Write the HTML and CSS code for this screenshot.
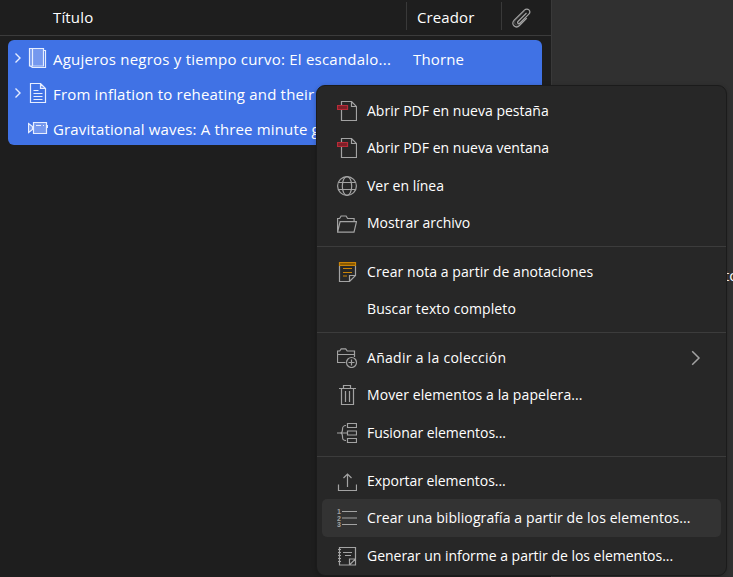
FILE: index.html
```html
<!DOCTYPE html>
<html lang="es">
<head>
<meta charset="utf-8">
<title>Biblioteca</title>
<link rel="stylesheet" href="styles.css">
</head>
<body>
<div class="app">
  <main class="library">
    <header class="columns">
      <span class="col-title">Título</span>
      <span class="col-creator">Creador</span>
      <span class="col-attach">
        <svg width="20" height="20" viewBox="0 0 20 20"><path d="M14.5 5 6.2 13.2c-1.5 1.5.3 3.3 1.8 1.8l8.6-8.6c3.2-3.2-1-7.4-4.2-4.2L2.2 12.1c-4 4 1.5 9.2 5.3 5.4l7.3-7.3"/><path d="m12.5 3-8.9 9c-3 3 .9 6.7 3.8 3.9" opacity=".3"/></svg>
      </span>
    </header>
    <section class="selection">
      <div class="row">
        <svg class="twisty" viewBox="0 0 8 12"><path d="m1.5 1.5 4.5 4.5-4.5 4.5"/></svg>
        <svg class="type" viewBox="0 0 20 20"><path class="tint" d="M1.5.5h14v17h-14z"/><path d="M1.5.5h14v17.500h-14zM4.500.5v17M15.500 2.500h2v17H4.500l-3-2"/></svg>
        <span class="name t-agujeros">Agujeros negros y tiempo curvo: El escandalo...</span>
        <span class="creator">Thorne</span>
      </div>
      <div class="row">
        <svg class="twisty" viewBox="0 0 8 12"><path d="m1.5 1.5 4.5 4.5-4.5 4.5"/></svg>
        <svg class="type" viewBox="0 0 20 20"><path class="tint" d="M12.500.5v5h5z"/><path d="M2.500.5h10l5 5v14h-15zM12.500.5v5h5M5.500 7.500h5M5.500 10.500h9M5.500 13.500h9M5.500 16.500h9"/></svg>
        <span class="name t-from">From inflation to reheating and their dynamics</span>
      </div>
      <div class="row">
        <span class="twisty"></span>
        <svg class="type" viewBox="0 0 20 20"><path class="tint" d="M5.500 4.500h13v11h-13zM.5 5.500l4 3v3l-4 3z"/><path d="M5.500 4.500h13v11h-13zM.5 5.500l4 3v3l-4 3zM8 7.500h5M15 7.500h1M19.500 7v3"/></svg>
        <span class="name t-grav">Gravitational waves: A three minute guide</span>
      </div>
    </section>
  </main>
  <aside class="details"><span>to</span></aside>
</div>

<nav class="menu">
  <div class="item">
    <svg viewBox="0 0 20 20"><path d="M4.500 4V.5h10l5 5v14h-15V9M14.500.5v5h5"/><path class="pdf" d="M.5 4.500h10v4H.5z"/></svg>
    <span class="m1">Abrir PDF en nueva pestaña</span>
  </div>
  <div class="item">
    <svg viewBox="0 0 20 20"><path d="M4.500 4V.5h10l5 5v14h-15V9M14.500.5v5h5"/><path class="pdf" d="M.5 4.500h10v4H.5z"/></svg>
    <span class="m1">Abrir PDF en nueva ventana</span>
  </div>
  <div class="item">
    <svg viewBox="0 0 20 20"><circle cx="10" cy="10" r="9.400"/><ellipse cx="10" cy="10" rx="4.700" ry="9.400"/><path d="M1.500 6.500h17M1.500 13.500h17"/></svg>
    <span>Ver en línea</span>
  </div>
  <div class="item">
    <svg viewBox="0 0 20 20"><path d="M.6 18.500v-13h2l1.500-2.500h5l1.500 2.500h6.500v3M.6 19.200l2.500-10.600h16.400l-2.500 10.600z"/></svg>
    <span>Mostrar archivo</span>
  </div>
  <hr>
  <div class="item">
    <svg viewBox="0 0 20 20"><path d="M2.500 4v15.500h10l6-6V4M12.500 19.500v-6h6"/><path class="note-bar" d="M2.500.5h16v3h-16z"/><path class="note" d="M6 6.500h9M6 10.500h9M6 14h4"/></svg>
    <span class="m5">Crear nota a partir de anotaciones</span>
  </div>
  <div class="item">
    <svg viewBox="0 0 20 20"></svg>
    <span class="m6">Buscar texto completo</span>
  </div>
  <hr class="roomy">
  <div class="item">
    <svg viewBox="0 0 20 20"><path d="M8.500 14.500h-8V3h2.200L4.200.8h4.500l1.500 2.200h7.300v6M.5 6.500h17"/><circle cx="14.500" cy="14.500" r="5"/><path d="M14.500 11.500v6M11.500 14.500h6"/></svg>
    <span class="m7">Añadir a la colección</span>
    <svg class="arrow" viewBox="0 0 10 16"><path d="m1.200 1.200 6.800 6.800-6.800 6.800"/></svg>
  </div>
  <div class="item">
    <svg viewBox="0 0 20 20"><path d="M2 3.500h17M6.500 3V.5h7V3M4.500 3.500v16h12v-16M8.500 6v11M12.500 6v11"/></svg>
    <span class="m8">Mover elementos a la papelera...</span>
  </div>
  <div class="item">
    <svg viewBox="0 0 20 20"><path d="M10.500.5h9v4h-9zM10.500 8h9v4h-9zM10.500 15.500h9v4h-9zM0 10h10M9 2.500c-3 0-3.500 1-3.500 4 0 2-.5 3.500-2.500 3.500 2 0 2.500 1.500 2.500 3.500 0 3 .5 4 3.500 4"/></svg>
    <span class="m9">Fusionar elementos...</span>
  </div>
  <hr class="tight">
  <div class="item">
    <svg viewBox="0 0 20 20"><path d="M1.500 13.500v6h18v-6M10.500 16V3M6.500 7l4-4 4 4"/></svg>
    <span class="m9">Exportar elementos...</span>
  </div>
  <div class="item active">
    <svg viewBox="0 0 20 20"><path d="M5 3.500h15M5 10h15M5 16.500h15"/><g class="digits"><text x="0" y="6">1</text><text x="0" y="12.500">2</text><text x="0" y="19">3</text></g></svg>
    <span class="m11">Crear una bibliografía a partir de los elementos...</span>
  </div>
  <div class="item">
    <svg viewBox="0 0 20 20"><path d="M2.500 1.500h16V13l-6 6h-10zM18.500 13v6h-6M12.500 19v-6h6M6 6.500h9M8 9.500h6M1 3.500h3M1 6.500h3M1 9.500h3M1 12.500h3M1 15.500h3"/></svg>
    <span class="m12">Generar un informe a partir de los elementos...</span>
  </div>
</nav>
</body>
</html>
```
FILE: styles.css
```css
* { box-sizing: border-box; }

body {
  margin: 0;
  height: 577px;
  overflow: hidden;
  background: #1e1e1e;
  color: #fff;
  font-family: "Open Sans", "Noto Sans", sans-serif;
  font-size: 15px;
  white-space: nowrap;
}

svg { fill: none; stroke: #a3a3a3; stroke-width: 1.2; flex: none; }

.app { display: flex; height: 577px; }
.library { width: 552px; flex: none; border-right: 1px solid #393939; }
.details {
  flex: 1;
  overflow: hidden;
  background: #303030;
  padding: 265px 0 0 172px;
  font-size: 15px;
  line-height: 20px;
}

.columns {
  display: flex;
  height: 36px;
  padding: 2px 0 5px;
  border-bottom: 1px solid #3b3b3b;
}
.columns > span { display: flex; align-items: center; height: 28px; padding-top: 1px; }
.col-title { width: 406px; padding-left: 53px; letter-spacing: .15px; }
.col-creator { width: 95px; padding-left: 10px; border-left: 1px solid #393939; letter-spacing: .1px; }
.columns > .col-attach { padding-left: 10px; padding-top: 4px; border-left: 1px solid #393939; }

.selection {
  width: 534px;
  margin: 4px 0 0 8px;
  border-radius: 6px;
  background: #4072e5;
  overflow: hidden;
}
.row { display: flex; align-items: center; height: 35px; padding-left: 6px; }
.row svg { stroke: #e6edff; }
.row .twisty { width: 8px; height: 12px; margin-right: 6px; stroke-width: 1.4; }
.row .type { width: 20px; height: 20px; margin-right: 5px; }
.row .tint { fill: #7598ee; stroke: none; }
.name { width: 360px; padding-top: 3px; }
.creator { padding-top: 3px; letter-spacing: .15px; }
.t-agujeros { letter-spacing: .225px; }
.t-from { letter-spacing: .18px; }
.t-grav { letter-spacing: .15px; }

/* rows start at x=53 after the disclosure arrow and type icon */
.row .name { margin-left: 0; }
.row .creator { margin-left: 0; }
.row .type + .name { padding-left: 0; }

.menu {
  position: absolute;
  left: 316px;
  top: 85px;
  width: 411px;
  height: 491px;
  padding-top: 6px;
  border: 1px solid #1b1b1b;
  border-radius: 9px;
  background: #272727;
  box-shadow: 0 1px 4px rgba(0, 0, 0, .25);
  font-size: 14px;
}
.menu hr { height: 1px; margin: 4.25px 0 5.5px; border: 0; background: #3c3c3c; }
.menu .roomy { margin-bottom: 6px; }
.menu .tight { margin-bottom: 5.2px; }
.item {
  display: flex;
  align-items: center;
  gap: 10px;
  height: 37.5px;
  margin: 0 5px;
  padding: 0 20px 0 15px;
  border-radius: 5px;
}
.item.active { background: #333; }
.item span { padding-bottom: .6px; }
.item svg { width: 20px; height: 20px; }
.item .arrow { width: 10px; height: 16px; margin-left: auto; stroke-width: 1.5; }
.item .pdf { fill: #7c2028; stroke: #b92b38; }
.note-bar { fill: #8a5900; stroke: #c98408; }
.note { stroke: #c98408; }
.digits { fill: #a3a3a3; stroke: none; font: bold 7px "Liberation Sans", sans-serif; }

.m1 { letter-spacing: .02px; }
.m5 { letter-spacing: .075px; }
.m6 { letter-spacing: .1px; }
.m7 { letter-spacing: .28px; }
.m8 { letter-spacing: .09px; }
.m9 { letter-spacing: -.05px; }
.m11 { letter-spacing: .1px; }
.m12 { letter-spacing: -.02px; }
```
